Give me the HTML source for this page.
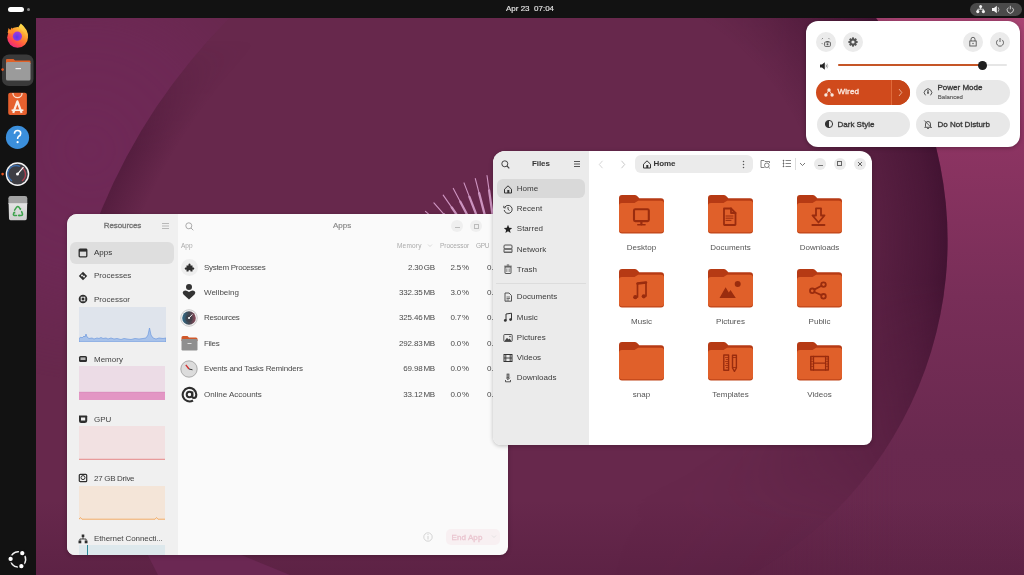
<!DOCTYPE html>
<html><head><meta charset="utf-8">
<style>
*{margin:0;padding:0;box-sizing:border-box}
html,body{width:1024px;height:575px;overflow:hidden;background:#6a2850;font-family:"Liberation Sans",sans-serif;-webkit-font-smoothing:antialiased}
#res,#files,#qs,#topbar{will-change:transform}
.abs{position:absolute}
#wall{position:absolute;left:0;top:0;width:1024px;height:575px}
#topbar{position:absolute;left:0;top:0;width:1024px;height:18px;background:#121212}
#dock{position:absolute;left:0;top:18px;width:36px;height:557px;background:#121212}
.t{position:absolute;white-space:nowrap;line-height:1}
/* resources window */
#res{position:absolute;left:67px;top:214px;width:441px;height:341px;border-radius:10px 10px 8px 8px;overflow:hidden;background:#fafafa;box-shadow:0 1px 4px rgba(0,0,0,.25)}
#res .side{position:absolute;left:0;top:0;width:111px;height:341px;background:#f0f0f0}
/* files window */
#files{position:absolute;left:493px;top:151px;width:379px;height:294px;border-radius:12px 12px 8px 8px;overflow:hidden;background:#fff;box-shadow:0 1px 4px rgba(0,0,0,.25)}
#files .side{position:absolute;left:0;top:0;width:96px;height:294px;background:#ebebeb}
/* quick settings */
#qs{position:absolute;left:806px;top:21px;width:214px;height:126px;border-radius:12px;background:#fff;box-shadow:0 1px 4px rgba(0,0,0,.3)}
</style></head><body>
<svg id="wall" width="1024" height="575" viewBox="0 0 1024 575">
  <defs>
    <linearGradient id="pinkG" gradientUnits="userSpaceOnUse" x1="0" y1="18" x2="0" y2="575">
      <stop offset="0" stop-color="#a84472"/><stop offset="0.23" stop-color="#8c3462"/><stop offset="0.5" stop-color="#782e58"/><stop offset="0.78" stop-color="#69294f"/><stop offset="1" stop-color="#67284c"/>
    </linearGradient>
    <linearGradient id="fadeX" gradientUnits="userSpaceOnUse" x1="700" y1="0" x2="900" y2="0">
      <stop offset="0" stop-color="#fff" stop-opacity="0"/><stop offset="1" stop-color="#fff" stop-opacity="1"/>
    </linearGradient>
    <mask id="mOutR" maskUnits="userSpaceOnUse" x="0" y="0" width="1024" height="575">
      <rect x="0" y="0" width="1024" height="575" fill="url(#fadeX)"/>
      <circle cx="565.6" cy="240.5" r="382" fill="#000"/>
    </mask>
    <radialGradient id="rimR" gradientUnits="userSpaceOnUse" cx="565.6" cy="240.5" r="382">
      <stop offset="0" stop-color="#3a0e2c" stop-opacity="0"/>
      <stop offset="0.68" stop-color="#3a0e2c" stop-opacity="0"/>
      <stop offset="0.84" stop-color="#3a0e2c" stop-opacity="0.36"/>
      <stop offset="0.95" stop-color="#3a0e2c" stop-opacity="0.62"/>
      <stop offset="1" stop-color="#3a0e2c" stop-opacity="0.8"/>
    </radialGradient>
    <linearGradient id="fadeR" gradientUnits="userSpaceOnUse" x1="600" y1="0" x2="790" y2="0">
      <stop offset="0" stop-color="#fff" stop-opacity="0"/><stop offset="1" stop-color="#fff" stop-opacity="1"/>
    </linearGradient>
    <linearGradient id="fadeRy" gradientUnits="userSpaceOnUse" x1="0" y1="280" x2="0" y2="520">
      <stop offset="0" stop-color="#fff" stop-opacity="1"/><stop offset="1" stop-color="#fff" stop-opacity="0.05"/>
    </linearGradient>
    <mask id="mRimR" maskUnits="userSpaceOnUse" x="0" y="0" width="1024" height="575">
      <rect x="0" y="0" width="1024" height="575" fill="url(#fadeR)"/>
    </mask>
    <mask id="mRimRy" maskUnits="userSpaceOnUse" x="0" y="0" width="1024" height="575">
      <rect x="0" y="0" width="1024" height="575" fill="url(#fadeRy)"/>
    </mask>
    <radialGradient id="rimL" gradientUnits="userSpaceOnUse" cx="646.5" cy="434.6" r="589.5">
      <stop offset="0" stop-color="#3a0e2c" stop-opacity="0"/>
      <stop offset="0.935" stop-color="#3a0e2c" stop-opacity="0"/>
      <stop offset="1" stop-color="#3a0e2c" stop-opacity="0.4"/>
    </radialGradient>
    <linearGradient id="leftG" gradientUnits="userSpaceOnUse" x1="0" y1="0" x2="400" y2="0">
      <stop offset="0" stop-color="#6f2957"/><stop offset="1" stop-color="#6f2957"/>
    </linearGradient>
    <radialGradient id="lightL" gradientUnits="userSpaceOnUse" cx="90" cy="150" r="230">
      <stop offset="0" stop-color="#fff" stop-opacity="1"/><stop offset="0.5" stop-color="#fff" stop-opacity="0.8"/><stop offset="1" stop-color="#fff" stop-opacity="0"/>
    </radialGradient>
    <linearGradient id="rimLfade" gradientUnits="userSpaceOnUse" x1="0" y1="40" x2="0" y2="280">
      <stop offset="0" stop-color="#fff" stop-opacity="0"/><stop offset="0.45" stop-color="#fff" stop-opacity="1"/><stop offset="0.72" stop-color="#fff" stop-opacity="1"/><stop offset="1" stop-color="#fff" stop-opacity="0"/>
    </linearGradient>
    <mask id="mRimL" maskUnits="userSpaceOnUse" x="0" y="0" width="1024" height="575">
      <rect x="0" y="0" width="1024" height="575" fill="url(#rimLfade)"/>
    </mask>
    <mask id="mOutL" maskUnits="userSpaceOnUse" x="0" y="0" width="1024" height="575">
      <rect x="0" y="0" width="1024" height="575" fill="url(#lightL)"/>
      <circle cx="646.5" cy="434.6" r="589.5" fill="#000"/>
    </mask>
  </defs>
  <rect width="1024" height="575" fill="#67284c"/>
  <rect x="0" y="0" width="400" height="575" fill="url(#leftG)" mask="url(#mOutL)"/>
  <circle cx="646.5" cy="434.6" r="589.5" fill="url(#rimL)" mask="url(#mRimL)"/>
  <rect x="560" y="0" width="464" height="575" fill="url(#pinkG)" mask="url(#mOutR)"/>
  <g mask="url(#mRimRy)"><circle cx="565.6" cy="240.5" r="382" fill="url(#rimR)" mask="url(#mRimR)"/></g>
  <linearGradient id="botDark" gradientUnits="userSpaceOnUse" x1="0" y1="500" x2="0" y2="575"><stop offset="0" stop-color="#3a0e2c" stop-opacity="0"/><stop offset="1" stop-color="#3a0e2c" stop-opacity="0.22"/></linearGradient>
  <rect x="36" y="500" width="988" height="75" fill="url(#botDark)"/>
  <path d="M140 540 L205 540 L290 575 L158 575 Z" fill="#6b2853"/>
  <g><path d="M425.5 211.4L436.6 221.5" stroke="#cf96c2" stroke-width="1.1" stroke-linecap="round"/><path d="M436.6 221.5L469.9 251.8" stroke="#cc94c0" stroke-width="2.3" stroke-linecap="round"/><path d="M433.9 202.8L443.8 214.1" stroke="#cf96c2" stroke-width="1.1" stroke-linecap="round"/><path d="M443.8 214.1L473.3 248.0" stroke="#cc94c0" stroke-width="2.3" stroke-linecap="round"/><path d="M443.2 195.1L451.7 207.4" stroke="#cf96c2" stroke-width="1.1" stroke-linecap="round"/><path d="M451.7 207.4L477.1 244.6" stroke="#cc94c0" stroke-width="2.3" stroke-linecap="round"/><path d="M453.3 188.4L460.3 201.7" stroke="#cf96c2" stroke-width="1.1" stroke-linecap="round"/><path d="M460.3 201.7L481.2 241.5" stroke="#cc94c0" stroke-width="2.3" stroke-linecap="round"/><path d="M464.0 182.9L469.4 196.9" stroke="#cf96c2" stroke-width="1.1" stroke-linecap="round"/><path d="M469.4 196.9L485.7 238.8" stroke="#cc94c0" stroke-width="2.3" stroke-linecap="round"/><path d="M475.3 178.6L479.1 193.1" stroke="#cf96c2" stroke-width="1.1" stroke-linecap="round"/><path d="M479.1 193.1L490.4 236.6" stroke="#cc94c0" stroke-width="2.3" stroke-linecap="round"/><path d="M487.0 175.5L489.1 190.4" stroke="#cf96c2" stroke-width="1.1" stroke-linecap="round"/><path d="M489.1 190.4L495.4 234.9" stroke="#cc94c0" stroke-width="2.3" stroke-linecap="round"/><path d="M498.9 173.7L499.3 188.7" stroke="#cf96c2" stroke-width="1.1" stroke-linecap="round"/><path d="M499.3 188.7L500.6 233.7" stroke="#cc94c0" stroke-width="2.3" stroke-linecap="round"/></g>
</svg>

<div id="topbar">
  <div class="abs" style="left:8px;top:7px;width:16px;height:5px;border-radius:3px;background:#fff"></div>
  <div class="abs" style="left:27px;top:8px;width:3px;height:3px;border-radius:50%;background:#888"></div>
  <div class="t" style="left:506px;top:5.3px;font-size:8px;color:#e4e4e4;-webkit-text-stroke:0.15px #e4e4e4">Apr 23&nbsp;&nbsp;07:04</div>
  <div class="abs" style="left:970px;top:2.5px;width:52px;height:13.8px;border-radius:7px;background:#4a4a4a"></div>
  <svg class="abs" style="left:975px;top:4px" width="45" height="11">
    <g fill="#f4f4f4"><circle cx="5.6" cy="2.4" r="1.5"/><circle cx="2.8" cy="7.6" r="1.6"/><circle cx="8.4" cy="7.6" r="1.6"/></g>
    <path d="M5.6 2.4V5.2M2.8 7.6V5.2H8.4V7.6" fill="none" stroke="#f4f4f4" stroke-width="0.8"/>
    <path d="M17 4H19L21.8 1.8V9.2L19 7H17Z" fill="#f4f4f4"/>
    <path d="M23.2 3.3Q24.6 5.5 23.2 7.7" fill="none" stroke="#ccc" stroke-width="0.9"/>
    <path d="M33.4 3.6A3.1 3.1 0 1 0 37.2 3.6" fill="none" stroke="#ddd" stroke-width="0.9"/>
    <path d="M35.3 1.8V5.3" stroke="#ddd" stroke-width="0.9"/>
  </svg>
</div>

<div id="dock">
  <svg class="abs" style="left:0;top:0" width="36" height="557" viewBox="0 18 36 557">
    <defs>
      <linearGradient id="ffg" x1="0.85" y1="0.1" x2="0.25" y2="0.95">
        <stop offset="0" stop-color="#ffd23c"/><stop offset="0.4" stop-color="#ff8a2e"/><stop offset="0.75" stop-color="#ff4a4a"/><stop offset="1" stop-color="#e82a80"/>
      </linearGradient>
      <linearGradient id="ffy" x1="0" y1="0" x2="0" y2="1">
        <stop offset="0" stop-color="#ffe04a"/><stop offset="1" stop-color="#ffa63a"/>
      </linearGradient>
      <radialGradient id="ffp" cx="0.45" cy="0.6" r="0.6">
        <stop offset="0" stop-color="#5a3ae8"/><stop offset="1" stop-color="#a83ad8"/>
      </radialGradient>
      <linearGradient id="trg" x1="0" y1="0" x2="0" y2="1">
        <stop offset="0" stop-color="#e4e4e4"/><stop offset="1" stop-color="#cfcfcf"/>
      </linearGradient>
    </defs>
    <!-- firefox -->
    <circle cx="17.6" cy="37.4" r="10.4" fill="url(#ffg)"/>
    <path d="M18.5 27 Q20 25 20.8 23.6 Q24 26 26.5 30 Q28.6 34 28 38.5 Q26 33 22 30.5 Z" fill="url(#ffy)"/>
    <path d="M7.6 33 L8.6 28 L10.3 30.2 L11.6 27.6 L13.2 30 L12 33.5 Z" fill="#ff8c2c"/>
    <circle cx="17.4" cy="36.2" r="4.6" fill="url(#ffp)"/>
  <!-- files (active) -->
    <rect x="2" y="54.5" width="31.5" height="31.5" rx="7" fill="#3a3a3a"/>
    <path d="M6 60 Q6 59 7 59 L13.5 59 L15 60.5 L29.5 60.5 Q30.5 60.5 30.5 61.5 L30.5 64 L6 64 Z" fill="#e0622a"/>
    <rect x="6" y="62" width="24.5" height="18.5" rx="1.5" fill="#9b9b9b"/>
    <rect x="15.5" y="68" width="5.5" height="1.2" fill="#eee"/>
    <circle cx="2.6" cy="69.6" r="1.3" fill="#e95420"/>
    <!-- app center -->
    <rect x="8.2" y="92.7" width="18.7" height="22.4" rx="2" fill="#e6602e"/>
    <path d="M12.9 93 A4.6 4.6 0 0 0 22.1 93" fill="none" stroke="#f8e0d0" stroke-width="1.3"/>
    <path d="M13.2 112.8 L17.4 101.3 L21.6 112.8" fill="none" stroke="#fbeee6" stroke-width="2.2" stroke-linejoin="round"/>
    <path d="M11.6 110.2 L23.4 110.2" stroke="#fbeee6" stroke-width="1.6"/>
    <!-- help -->
    <circle cx="17.5" cy="137.4" r="11.6" fill="#3b8fdc"/>
    <path d="M14.4 133.7 Q14.6 130.5 17.6 130.5 Q20.7 130.5 20.7 133.4 Q20.7 135.2 18.7 136.3 Q17.6 137 17.6 139" fill="none" stroke="#fff" stroke-width="1.6"/>
    <circle cx="17.6" cy="142.2" r="1.1" fill="#fff"/>
    <!-- resources -->
    <circle cx="17.5" cy="174.1" r="11.8" fill="#f4f4f4"/>
    <circle cx="17.5" cy="174.1" r="10.3" fill="#3e3e44"/>
    <path d="M12 181 A8 8 0 0 1 20 166.5" fill="none" stroke="#3a6fb0" stroke-width="1.4"/>
    <path d="M21.5 167.5 A8 8 0 0 1 22 181" fill="none" stroke="#b04050" stroke-width="1.4"/>
    <path d="M17.5 174.1 L23.5 167.2" stroke="#fff" stroke-width="1.2"/>
    <circle cx="17.5" cy="174.1" r="1.5" fill="#fff"/>
    <circle cx="2.6" cy="174.1" r="1.3" fill="#e95420"/>
    <!-- trash -->
    <path d="M8.6 203 L27.2 203 L26.8 218.6 Q26.8 220.2 25.2 220.2 L10.6 220.2 Q9 220.2 9 218.6 Z" fill="url(#trg)"/>
    <path d="M8.4 198.2 Q8.4 196 10.6 196 L25 196 Q27.3 196 27.3 198.2 L27.3 203.6 L8.4 203.6 Z" fill="#a3a3a3"/>
    <path d="M8.4 203.6 H27.3" stroke="#e6e6e6" stroke-width="0.6"/>
    <g fill="none" stroke="#3da24c" stroke-width="1.5" stroke-linecap="round">
      <path d="M14.6 210.2 L16.6 207.2 Q17.8 205.6 19 207.2 L20.2 209"/>
      <path d="M21.6 211.6 L22.4 213.6 Q23 215.4 21 215.4 L18.8 215.4"/>
      <path d="M16.4 215.4 L14.6 215.4 Q12.8 215.4 13.6 213.6 L14.2 212.4"/>
    </g>
    <g fill="#3da24c"><path d="M19.2 208 L21.4 208.4 L20.6 210.4Z"/><path d="M19.4 214 L19.4 216.8 L17.6 215.4Z"/><path d="M13.2 212.8 L15.2 211.4 L15.4 213.6Z"/></g>
  <!-- ubuntu logo -->
    <g transform="translate(18.1,559.4) rotate(4)">
      <circle r="7.6" fill="none" stroke="#f2f2f2" stroke-width="1.5"/>
      <circle cx="-7.5" cy="0" r="2.9" fill="#fff" stroke="#121212" stroke-width="1.5"/>
      <circle cx="3.75" cy="-6.5" r="2.9" fill="#fff" stroke="#121212" stroke-width="1.5"/>
      <circle cx="3.75" cy="6.5" r="2.9" fill="#fff" stroke="#121212" stroke-width="1.5"/>
    </g>
  </svg>
</div>

<div id="res">
  <div class="side">
    <div class="t" style="left:36.8px;top:8.2px;font-size:8px;font-weight:400;color:#777;-webkit-text-stroke:0.35px #777;letter-spacing:-0.1px">Resources</div>
    <svg class="abs" style="left:94px;top:8px" width="9" height="8"><g stroke="#aaa" stroke-width="0.8"><path d="M1 1.5H8M1 4H8M1 6.5H8"/></g></svg>
    <div class="abs" style="left:3px;top:28px;width:104px;height:22px;border-radius:6px;background:#dedede"></div>
    <svg class="abs" style="left:11px;top:34px" width="10" height="10"><rect x="1.2" y="1.2" width="7.6" height="7.6" rx="0.8" fill="none" stroke="#2e2e2e" stroke-width="1.3"/><rect x="1" y="1" width="8" height="2.6" fill="#2e2e2e"/></svg>
    <div class="t" style="left:27px;top:35px;font-size:8px;color:#333">Apps</div>
    <svg class="abs" style="left:11px;top:57px" width="10" height="10"><path d="M5 0.8L9.2 5L5 9.2L0.8 5Z" fill="#2e2e2e"/><circle cx="4" cy="4.5" r="1" fill="#f0f0f0"/><circle cx="6" cy="5.5" r="1" fill="#f0f0f0"/></svg>
    <div class="t" style="left:27px;top:58.3px;font-size:8px;color:#444">Processes</div>
    <svg class="abs" style="left:11px;top:80px" width="10" height="10"><circle cx="5" cy="5" r="4.3" fill="#2e2e2e"/><rect x="3.2" y="3.2" width="3.6" height="3.6" fill="none" stroke="#f0f0f0" stroke-width="0.9"/></svg>
    <div class="t" style="left:27px;top:81.7px;font-size:8px;color:#444">Processor</div>
    <svg class="abs" style="left:12px;top:93px" width="87" height="35">
      <rect width="87" height="35" fill="#dfe4ec"/>
      <path d="M0 31.5 L2 30 L3 31 L5 29 L6 30 L7 27 L8 30 L10 31.5 L13 31 L15 32 L18 31 L20 31.5 L22 30.5 L24 31.5 L27 31 L29 32 L32 31 L35 32 L38 31.5 L42 32.5 L45 31.5 L48 32 L52 32.5 L56 31.5 L60 32 L64 31.5 L67 31 L69 28 L70.5 21 L72 28 L74 31 L77 32 L80 31 L84 31.5 L87 31 L87 35 L0 35 Z" fill="#a8c2ea" stroke="#6f9ade" stroke-width="0.7"/>
    </svg>
    <svg class="abs" style="left:11px;top:140px" width="10" height="10"><rect x="1" y="2" width="8" height="6" rx="1.5" fill="#2e2e2e"/><rect x="2.5" y="3.5" width="5" height="2.5" fill="#f0f0f0"/><path d="M3 3.5V6M5 3.5V6M7 3.5V6" stroke="#2e2e2e" stroke-width="0.6"/></svg>
    <div class="t" style="left:27px;top:141.6px;font-size:8px;color:#444">Memory</div>
    <svg class="abs" style="left:12px;top:152px" width="86" height="34">
      <rect width="86" height="34" fill="#ecdce6"/>
      <rect y="26.3" width="86" height="7.7" fill="#e396c4"/>
      <path d="M0 26.3 H86" stroke="#d878b4" stroke-width="0.7"/>
    </svg>
    <svg class="abs" style="left:11px;top:200px" width="10" height="10"><path d="M1 1.5H8.5Q9.2 1.5 9.2 2.2V6.5Q9.2 9 6.5 9H3Q1 9 1 7Z" fill="#2e2e2e"/><rect x="3" y="3.5" width="4.2" height="3" fill="#f0f0f0"/></svg>
    <div class="t" style="left:27px;top:201.6px;font-size:8px;color:#444">GPU</div>
    <svg class="abs" style="left:12px;top:212px" width="86" height="34">
      <rect width="86" height="34" fill="#f2e1e2"/>
      <path d="M0 33.3 H86" stroke="#e27474" stroke-width="0.8"/>
    </svg>
    <svg class="abs" style="left:11px;top:259px" width="10" height="10"><rect x="1.3" y="1.3" width="7.4" height="7.4" rx="1" fill="none" stroke="#2e2e2e" stroke-width="1.2"/><circle cx="5" cy="4.6" r="2" fill="none" stroke="#2e2e2e" stroke-width="1"/></svg>
    <div class="t" style="left:27px;top:260.9px;font-size:8px;color:#444;letter-spacing:-0.3px">27 GB Drive</div>
    <svg class="abs" style="left:12px;top:272px" width="86" height="34">
      <rect width="86" height="34" fill="#f4e5d8"/>
      <path d="M0 33.2 L1.5 31.5 L3 33.2 L40 33.2 L76 33.2 L77.5 31.5 L79 33.2 L86 33.2" fill="none" stroke="#f0a860" stroke-width="0.9"/>
    </svg>
    <svg class="abs" style="left:11px;top:320px" width="10" height="10"><rect x="3.7" y="0.5" width="2.6" height="2.6" fill="#2e2e2e"/><rect x="0.5" y="6.5" width="2.8" height="2.8" fill="#2e2e2e"/><rect x="6.7" y="6.5" width="2.8" height="2.8" fill="#2e2e2e"/><path d="M5 3V5M1.9 6.5V5H8.1V6.5" fill="none" stroke="#2e2e2e" stroke-width="0.9"/></svg>
    <div class="t" style="left:27px;top:321px;font-size:8px;color:#444;letter-spacing:-0.1px">Ethernet Connecti...</div>
    <svg class="abs" style="left:12px;top:331px" width="86" height="12">
      <rect width="86" height="12" fill="#dde8ec"/>
      <path d="M8.5 0 V12" stroke="#2a8a9a" stroke-width="1"/>
    </svg>
  </div>
  <svg class="abs" style="left:118px;top:8px" width="9" height="9"><circle cx="3.8" cy="3.8" r="3" fill="none" stroke="#aaa" stroke-width="1"/><path d="M6 6L8.3 8.3" stroke="#aaa" stroke-width="1"/></svg>
  <div class="t" style="left:266px;top:8.4px;font-size:8px;color:#8a8a8a;-webkit-text-stroke:0.2px #8a8a8a">Apps</div>
  <div class="abs" style="left:384px;top:6px;width:12px;height:12px;border-radius:50%;background:#efefef"></div>
  <div class="abs" style="left:387.5px;top:12.5px;width:5px;height:1px;background:#bbb"></div>
  <div class="abs" style="left:403px;top:6px;width:12px;height:12px;border-radius:50%;background:#efefef"></div>
  <div class="abs" style="left:406.5px;top:9.5px;width:5px;height:5px;border:1px solid #bbb"></div>
  <div class="t" style="left:114px;top:28.7px;font-size:6.5px;color:#aaa">App</div>
  <div class="t" style="left:330px;top:28.7px;font-size:6.5px;color:#aaa;letter-spacing:0.2px">Memory</div>
  <svg class="abs" style="left:360px;top:29px" width="6" height="5"><path d="M1 1.5L3 3.5L5 1.5" fill="none" stroke="#ccc" stroke-width="0.7"/></svg>
  <div class="t" style="left:373px;top:28.7px;font-size:6.5px;color:#aaa">Processor</div>
  <div class="t" style="left:409px;top:28.7px;font-size:6.5px;color:#aaa;letter-spacing:-0.3px">GPU</div>

  <div class="abs" style="left:114px;top:45px;width:17px;height:17px;border-radius:50%;background:#eeeeee"></div>
  <svg class="abs" style="left:117px;top:48px" width="11" height="11"><path d="M2.5 3.5H4.5Q4 1.5 5.5 1.5Q7 1.5 6.5 3.5H8.5V5.5Q10.3 5 10.3 6.5Q10.3 8 8.5 7.5V9.5H6.5Q7 8 5.5 8Q4 8 4.5 9.5H2.5V7.5Q0.7 8 0.7 6.5Q0.7 5 2.5 5.5Z" fill="#2e2e2e"/></svg>
  <div class="t" style="left:137px;top:49.5px;font-size:8px;color:#4a4a4a;letter-spacing:-0.3px">System Processes</div>

  <svg class="abs" style="left:114px;top:69px" width="16" height="18"><circle cx="8" cy="4" r="3" fill="#333"/><path d="M8 16.5 L2.5 11.5 Q0.8 9.5 2.5 8 Q5 6.5 8 9 Q11 6.5 13.5 8 Q15.2 9.5 13.5 11.5Z" fill="#333"/></svg>
  <div class="t" style="left:137px;top:74.5px;font-size:8px;color:#4a4a4a;letter-spacing:0px">Wellbeing</div>

  <svg class="abs" style="left:113px;top:95px" width="18" height="18">
    <defs><linearGradient id="rsg" x1="0" y1="0" x2="1" y2="0"><stop offset="0" stop-color="#2f6a88"/><stop offset="0.5" stop-color="#404650"/><stop offset="1" stop-color="#8a4858"/></linearGradient></defs>
    <circle cx="9" cy="9" r="8.3" fill="#f2f2f2" stroke="#b8b8b8" stroke-width="0.7"/>
    <circle cx="9" cy="9" r="6.8" fill="url(#rsg)"/>
    <circle cx="9" cy="9.6" r="3.5" fill="#3c3c44" opacity="0.6"/>
    <path d="M9 9L12.4 5.4" stroke="#f4f4f4" stroke-width="1"/><circle cx="9" cy="9" r="1.1" fill="#f4f4f4"/>
  </svg>
  <div class="t" style="left:137px;top:100px;font-size:8px;color:#4a4a4a;letter-spacing:-0.3px">Resources</div>

  <svg class="abs" style="left:114px;top:121px" width="17" height="16">
    <path d="M0.5 2.5Q0.5 1 2 1H6.5L8 2.5H15Q16.5 2.5 16.5 4V6H0.5Z" fill="#d0582a"/>
    <rect x="0.5" y="4" width="16" height="11.5" rx="1.2" fill="#8f8f8f"/>
    <rect x="6.5" y="8" width="4" height="0.9" fill="#e8e8e8"/>
  </svg>
  <div class="t" style="left:137px;top:125.5px;font-size:8px;color:#4a4a4a;letter-spacing:-0.3px">Files</div>

  <svg class="abs" style="left:113px;top:146px" width="18" height="18">
    <circle cx="9" cy="9" r="8.2" fill="#dcdcdc" stroke="#9a9a9a" stroke-width="0.8"/>
    <path d="M9 9L5.8 4.8" stroke="#d03030" stroke-width="1.4"/>
    <path d="M9 9L12.5 9.8" stroke="#333" stroke-width="1"/>
  </svg>
  <div class="t" style="left:137px;top:151px;font-size:8px;color:#4a4a4a;letter-spacing:-0.18px">Events and Tasks Reminders</div>

  <svg class="abs" style="left:114px;top:172px" width="17" height="17">
    <circle cx="8.5" cy="8.5" r="2.8" fill="none" stroke="#2e2e2e" stroke-width="2"/>
    <path d="M11.3 5.5V10Q11.3 12 13 12Q15.3 12 15.3 8.5A6.8 6.8 0 1 0 12 14.5" fill="none" stroke="#2e2e2e" stroke-width="2.1"/>
  </svg>
  <div class="t" style="left:137px;top:176.5px;font-size:8px;color:#4a4a4a;letter-spacing:0px">Online Accounts</div>

  <div class="t" style="right:73px;top:49.5px;font-size:8px;color:#4a4a4a;letter-spacing:-0.2px">2.30<span style="margin-left:1px">GB</span></div>
  <div class="t" style="right:73px;top:74.5px;font-size:8px;color:#4a4a4a;letter-spacing:-0.2px">332.35<span style="margin-left:1px">MB</span></div>
  <div class="t" style="right:73px;top:100px;font-size:8px;color:#4a4a4a;letter-spacing:-0.2px">325.46<span style="margin-left:1px">MB</span></div>
  <div class="t" style="right:73px;top:125.5px;font-size:8px;color:#4a4a4a;letter-spacing:-0.2px">292.83<span style="margin-left:1px">MB</span></div>
  <div class="t" style="right:73px;top:151px;font-size:8px;color:#4a4a4a;letter-spacing:-0.2px">69.98<span style="margin-left:1px">MB</span></div>
  <div class="t" style="right:73px;top:176.5px;font-size:8px;color:#4a4a4a;letter-spacing:-0.2px">33.12<span style="margin-left:1px">MB</span></div>
  <div class="t" style="right:39px;top:49.5px;font-size:8px;color:#4a4a4a;letter-spacing:-0.2px">2.5<span style="margin-left:1px">%</span></div>
  <div class="t" style="right:39px;top:74.5px;font-size:8px;color:#4a4a4a;letter-spacing:-0.2px">3.0<span style="margin-left:1px">%</span></div>
  <div class="t" style="right:39px;top:100px;font-size:8px;color:#4a4a4a;letter-spacing:-0.2px">0.7<span style="margin-left:1px">%</span></div>
  <div class="t" style="right:39px;top:125.5px;font-size:8px;color:#4a4a4a;letter-spacing:-0.2px">0.0<span style="margin-left:1px">%</span></div>
  <div class="t" style="right:39px;top:151px;font-size:8px;color:#4a4a4a;letter-spacing:-0.2px">0.0<span style="margin-left:1px">%</span></div>
  <div class="t" style="right:39px;top:176.5px;font-size:8px;color:#4a4a4a;letter-spacing:-0.2px">0.0<span style="margin-left:1px">%</span></div>
  <div class="t" style="left:420px;top:49.5px;font-size:8px;color:#4a4a4a">0.</div>
  <div class="t" style="left:420px;top:74.5px;font-size:8px;color:#4a4a4a">0.</div>
  <div class="t" style="left:420px;top:100px;font-size:8px;color:#4a4a4a">0.</div>
  <div class="t" style="left:420px;top:125.5px;font-size:8px;color:#4a4a4a">0.</div>
  <div class="t" style="left:420px;top:151px;font-size:8px;color:#4a4a4a">0.</div>
  <div class="t" style="left:420px;top:176.5px;font-size:8px;color:#4a4a4a">0.</div>

  <svg class="abs" style="left:356px;top:318px" width="10" height="10"><circle cx="5" cy="5" r="4.2" fill="none" stroke="#d0d0d0" stroke-width="0.9"/><path d="M5 4V7.5" stroke="#d0d0d0" stroke-width="1"/><circle cx="5" cy="2.6" r="0.6" fill="#d0d0d0"/></svg>
  <div class="abs" style="left:379px;top:315px;width:54px;height:16px;border-radius:5px;background:#f8f0f2"></div>
  <div class="t" style="left:384.5px;top:319.8px;font-size:8px;font-weight:400;color:#eac6d0;-webkit-text-stroke:0.3px #eac6d0;letter-spacing:0.1px">End App</div>
  <svg class="abs" style="left:424px;top:320px" width="6" height="5"><path d="M1 1.5L3 3.5L5 1.5" fill="none" stroke="#ddd" stroke-width="0.7"/></svg>
</div>

<div id="files">
  <div class="side">
    <svg class="abs" style="left:8px;top:9px" width="9" height="9"><circle cx="3.8" cy="3.8" r="3" fill="none" stroke="#444" stroke-width="1"/><path d="M6 6L8.3 8.3" stroke="#444" stroke-width="1.1"/></svg>
    <div class="t" style="left:39px;top:8.5px;font-size:8px;font-weight:700;color:#333;letter-spacing:-0.1px">Files</div>
    <svg class="abs" style="left:80px;top:9px" width="8" height="8"><path d="M1 1.5H7M1 4H7M1 6.5H7" stroke="#444" stroke-width="0.9"/></svg>
    <div class="abs" style="left:4px;top:28px;width:88px;height:19px;border-radius:6px;background:#d9d9d9"></div>
    <div class="abs" style="left:3px;top:132px;width:89.5px;height:1px;background:#dcdcdc"></div>
    <svg class="abs" style="left:9.6px;top:32.7px" width="10" height="10"><path d="M1.5 5.2L5 1.8L8.5 5.2V9H1.5Z" fill="none" stroke="#333" stroke-width="1"/><rect x="4.3" y="6" width="2" height="3" fill="#333"/></svg>
    <div class="t" style="left:23.8px;top:34.1px;font-size:8px;color:#3a3a3a">Home</div>
    <svg class="abs" style="left:9.6px;top:52.9px" width="10" height="10"><path d="M1.8 3.2A4 4 0 1 1 1.2 6" fill="none" stroke="#333" stroke-width="0.9"/><path d="M0.8 1.8V3.8H2.8" fill="none" stroke="#333" stroke-width="0.9"/><path d="M5 3V5.3L6.5 6.5" fill="none" stroke="#333" stroke-width="0.9"/></svg>
    <div class="t" style="left:23.8px;top:54.3px;font-size:8px;color:#3a3a3a">Recent</div>
    <svg class="abs" style="left:9.6px;top:72.9px" width="10" height="10"><path d="M5 0.8L6.2 3.7L9.2 3.9L6.9 5.9L7.6 8.9L5 7.3L2.4 8.9L3.1 5.9L0.8 3.9L3.8 3.7Z" fill="#222"/></svg>
    <div class="t" style="left:23.8px;top:74.3px;font-size:8px;color:#3a3a3a">Starred</div>
    <svg class="abs" style="left:9.6px;top:93.1px" width="10" height="10"><rect x="1" y="1" width="8" height="4" rx="1" fill="none" stroke="#444" stroke-width="0.9"/><rect x="1" y="5" width="8" height="3.5" rx="0.5" fill="none" stroke="#444" stroke-width="0.9"/><rect x="1" y="7.5" width="8" height="1.5" fill="#666"/></svg>
    <div class="t" style="left:23.8px;top:94.5px;font-size:8px;color:#3a3a3a">Network</div>
    <svg class="abs" style="left:9.6px;top:113.2px" width="10" height="10"><path d="M2 3H8V9Q8 9.5 7.5 9.5H2.5Q2 9.5 2 9Z" fill="none" stroke="#444" stroke-width="0.9"/><path d="M1.2 2.2H8.8M3.8 1H6.2" stroke="#444" stroke-width="0.9"/><path d="M3.5 4.5V8M5 4.5V8M6.5 4.5V8" stroke="#777" stroke-width="0.6"/></svg>
    <div class="t" style="left:23.8px;top:114.6px;font-size:8px;color:#3a3a3a">Trash</div>
    <svg class="abs" style="left:9.6px;top:141px" width="10" height="10"><path d="M2 1H6L8.5 3.5V9.2H2Z" fill="none" stroke="#444" stroke-width="0.9"/><path d="M3.5 5H7M3.5 6.5H7M3.5 8H6" stroke="#444" stroke-width="0.7"/></svg>
    <div class="t" style="left:23.8px;top:142.4px;font-size:8px;color:#3a3a3a">Documents</div>
    <svg class="abs" style="left:9.6px;top:161.1px" width="10" height="10"><path d="M3 8.5V2L8.5 1.2V7.5" fill="none" stroke="#333" stroke-width="1"/><circle cx="2.3" cy="8.4" r="1.4" fill="#333"/><circle cx="7.6" cy="7.6" r="1.4" fill="#333"/></svg>
    <div class="t" style="left:23.8px;top:162.5px;font-size:8px;color:#3a3a3a">Music</div>
    <svg class="abs" style="left:9.6px;top:181.5px" width="10" height="10"><rect x="0.8" y="1.5" width="8.4" height="7" rx="0.8" fill="none" stroke="#444" stroke-width="0.9"/><path d="M1.5 8L4 4.8L5.5 6.5L6.5 5.5L8.5 8Z" fill="#444"/><circle cx="7" cy="3.5" r="0.8" fill="#444"/></svg>
    <div class="t" style="left:23.8px;top:182.9px;font-size:8px;color:#3a3a3a">Pictures</div>
    <svg class="abs" style="left:9.6px;top:201.6px" width="10" height="10"><rect x="1" y="1.5" width="8" height="7" fill="none" stroke="#333" stroke-width="1"/><path d="M1 5H9M2.8 1.5V8.5M7.2 1.5V8.5" stroke="#333" stroke-width="0.9"/></svg>
    <div class="t" style="left:23.8px;top:203.0px;font-size:8px;color:#3a3a3a">Videos</div>
    <svg class="abs" style="left:9.6px;top:221.7px" width="10" height="10"><path d="M5 1V6.5M3.2 4.8L5 6.6L6.8 4.8" fill="none" stroke="#444" stroke-width="0.9"/><path d="M2.5 7V8.8H7.5V7" fill="none" stroke="#444" stroke-width="0.9"/><rect x="4" y="1" width="2" height="3.5" fill="none" stroke="#444" stroke-width="0.7"/></svg>
    <div class="t" style="left:23.8px;top:223.1px;font-size:8px;color:#3a3a3a">Downloads</div>
  </div>
  <svg class="abs" style="left:105px;top:9px" width="6" height="9"><path d="M4.5 0.8L1.3 4.5L4.5 8.2" fill="none" stroke="#ccc" stroke-width="0.8"/></svg>
  <svg class="abs" style="left:126.5px;top:9px" width="6" height="9"><path d="M1.5 0.8L4.7 4.5L1.5 8.2" fill="none" stroke="#bbb" stroke-width="0.8"/></svg>
  <div class="abs" style="left:141.7px;top:3.7px;width:118px;height:18px;border-radius:6px;background:#ebebeb"></div>
  <svg class="abs" style="left:148.5px;top:8px" width="10" height="10"><path d="M1.5 5.2L5 1.8L8.5 5.2V9H1.5Z" fill="none" stroke="#333" stroke-width="1"/><rect x="4.3" y="6" width="2" height="3" fill="#333"/></svg>
  <div class="t" style="left:160.5px;top:9px;font-size:8px;font-weight:700;color:#333;letter-spacing:-0.1px">Home</div>
  <svg class="abs" style="left:249px;top:9px" width="3" height="9"><circle cx="1.5" cy="1.5" r="0.75" fill="#555"/><circle cx="1.5" cy="4.5" r="0.75" fill="#555"/><circle cx="1.5" cy="7.5" r="0.75" fill="#555"/></svg>
  <svg class="abs" style="left:267px;top:7.5px" width="11" height="10"><path d="M1 8.5V1.5H4L5 2.5H9.5V4" fill="none" stroke="#666" stroke-width="0.8"/><path d="M1 8.5H4.5" stroke="#666" stroke-width="0.8"/><circle cx="6.8" cy="6.3" r="2.3" fill="none" stroke="#666" stroke-width="0.8"/><path d="M8.4 8L9.8 9.4" stroke="#666" stroke-width="0.9"/></svg>
  <svg class="abs" style="left:289px;top:8px" width="10" height="9"><path d="M3.5 1.5H9M3.5 4.5H9M3.5 7.5H9" stroke="#666" stroke-width="0.8"/><circle cx="1.5" cy="1.5" r="0.8" fill="#666"/><circle cx="1.5" cy="4.5" r="0.8" fill="#666"/><circle cx="1.5" cy="7.5" r="0.8" fill="#666"/><path d="M1.5 1.5V7.5" stroke="#666" stroke-width="0.6"/></svg>
  <div class="abs" style="left:302px;top:6.5px;width:0.8px;height:12px;background:#ddd"></div>
  <svg class="abs" style="left:305.5px;top:10.5px" width="7" height="5"><path d="M1 1L3.5 3.5L6 1" fill="none" stroke="#555" stroke-width="0.8"/></svg>
  <div class="abs" style="left:321.2px;top:6.5px;width:12px;height:12px;border-radius:50%;background:#ebebeb"></div>
  <div class="abs" style="left:325px;top:13.8px;width:4.5px;height:0.9px;background:#777"></div>
  <div class="abs" style="left:340.7px;top:6.5px;width:12px;height:12px;border-radius:50%;background:#ebebeb"></div>
  <div class="abs" style="left:344.4px;top:10px;width:4.6px;height:4.8px;border:0.9px solid #666"></div>
  <div class="abs" style="left:360.9px;top:6.5px;width:12px;height:12px;border-radius:50%;background:#ebebeb"></div>
  <svg class="abs" style="left:363.9px;top:9.5px" width="6" height="6"><path d="M1 1L5 5M5 1L1 5" stroke="#555" stroke-width="0.9"/></svg>
<svg class="abs" style="left:126px;top:44.4px" width="45" height="39" viewBox="0 0 45 39">
    <path d="M0 3Q0 0 3 0H15.5Q17.2 0 18.4 1.3L20.3 3.3H42Q45 3.3 45 6.3V20H0Z" fill="#b63a14"/>
    <path d="M0 11Q0 8 3 8H15.5L19.2 5.8H42Q45 5.8 45 8.8V35.5Q45 38.5 42 38.5H3Q0 38.5 0 35.5Z" fill="#bf4518"/>
    <path d="M0 11Q0 8 3 8H15.5L19.2 5.8H42Q45 5.8 45 8.8V34.5Q45 37.3 42 37.3H3Q0 37.3 0 34.5Z" fill="#e0602a"/>
    <g fill="none" stroke="#9a2c0e" stroke-width="1.8" stroke-linejoin="round" stroke-linecap="round"><rect x="15" y="14.3" width="14.8" height="11.8" rx="1.3" stroke-width="2.1"/><path d="M22.4 26V29.3" stroke-width="2.2"/><path d="M18.8 29.8H26" stroke-width="1.6"/></g>
  </svg>
  <div class="t" style="left:106px;width:85px;text-align:center;top:92.9px;font-size:8px;color:#555">Desktop</div>
<svg class="abs" style="left:215px;top:44.4px" width="45" height="39" viewBox="0 0 45 39">
    <path d="M0 3Q0 0 3 0H15.5Q17.2 0 18.4 1.3L20.3 3.3H42Q45 3.3 45 6.3V20H0Z" fill="#b63a14"/>
    <path d="M0 11Q0 8 3 8H15.5L19.2 5.8H42Q45 5.8 45 8.8V35.5Q45 38.5 42 38.5H3Q0 38.5 0 35.5Z" fill="#bf4518"/>
    <path d="M0 11Q0 8 3 8H15.5L19.2 5.8H42Q45 5.8 45 8.8V34.5Q45 37.3 42 37.3H3Q0 37.3 0 34.5Z" fill="#e0602a"/>
    <g fill="none" stroke="#9a2c0e" stroke-width="1.8" stroke-linejoin="round" stroke-linecap="round"><path d="M16 13.5H23L27.5 18V29.5Q27.5 30 27 30H16.5Q16 30 16 29.5Z"/><path d="M23 13.5V18H27.5"/><path d="M18 21H25M18 23.2H25M18 25.4H23" stroke-width="1"/></g>
  </svg>
  <div class="t" style="left:195px;width:85px;text-align:center;top:92.9px;font-size:8px;color:#555">Documents</div>
<svg class="abs" style="left:304px;top:44.4px" width="45" height="39" viewBox="0 0 45 39">
    <path d="M0 3Q0 0 3 0H15.5Q17.2 0 18.4 1.3L20.3 3.3H42Q45 3.3 45 6.3V20H0Z" fill="#b63a14"/>
    <path d="M0 11Q0 8 3 8H15.5L19.2 5.8H42Q45 5.8 45 8.8V35.5Q45 38.5 42 38.5H3Q0 38.5 0 35.5Z" fill="#bf4518"/>
    <path d="M0 11Q0 8 3 8H15.5L19.2 5.8H42Q45 5.8 45 8.8V34.5Q45 37.3 42 37.3H3Q0 37.3 0 34.5Z" fill="#e0602a"/>
    <g fill="none" stroke="#9a2c0e" stroke-width="1.8" stroke-linejoin="round" stroke-linecap="round"><path d="M19 13.3H24V20.5H27.5L21.5 27.5L15.5 20.5H19Z"/><path d="M15.3 30H27.5"/></g>
  </svg>
  <div class="t" style="left:284px;width:85px;text-align:center;top:92.9px;font-size:8px;color:#555">Downloads</div>
<svg class="abs" style="left:126px;top:118.4px" width="45" height="39" viewBox="0 0 45 39">
    <path d="M0 3Q0 0 3 0H15.5Q17.2 0 18.4 1.3L20.3 3.3H42Q45 3.3 45 6.3V20H0Z" fill="#b63a14"/>
    <path d="M0 11Q0 8 3 8H15.5L19.2 5.8H42Q45 5.8 45 8.8V35.5Q45 38.5 42 38.5H3Q0 38.5 0 35.5Z" fill="#bf4518"/>
    <path d="M0 11Q0 8 3 8H15.5L19.2 5.8H42Q45 5.8 45 8.8V34.5Q45 37.3 42 37.3H3Q0 37.3 0 34.5Z" fill="#e0602a"/>
    <g fill="none" stroke="#9a2c0e" stroke-width="1.8" stroke-linejoin="round" stroke-linecap="round"><path d="M18.5 28V14.5L27 13.5V27" stroke-width="1.7"/><path d="M18.5 14.5L27 13.5" stroke-width="2.6"/><circle cx="16.3" cy="28.2" r="2.1" fill="#9a2c0e" stroke="none"/><circle cx="24.8" cy="27.3" r="2.1" fill="#9a2c0e" stroke="none"/></g>
  </svg>
  <div class="t" style="left:106px;width:85px;text-align:center;top:166.5px;font-size:8px;color:#555">Music</div>
<svg class="abs" style="left:215px;top:118.4px" width="45" height="39" viewBox="0 0 45 39">
    <path d="M0 3Q0 0 3 0H15.5Q17.2 0 18.4 1.3L20.3 3.3H42Q45 3.3 45 6.3V20H0Z" fill="#b63a14"/>
    <path d="M0 11Q0 8 3 8H15.5L19.2 5.8H42Q45 5.8 45 8.8V35.5Q45 38.5 42 38.5H3Q0 38.5 0 35.5Z" fill="#bf4518"/>
    <path d="M0 11Q0 8 3 8H15.5L19.2 5.8H42Q45 5.8 45 8.8V34.5Q45 37.3 42 37.3H3Q0 37.3 0 34.5Z" fill="#e0602a"/>
    <g fill="none" stroke="#9a2c0e" stroke-width="1.8" stroke-linejoin="round" stroke-linecap="round"><circle cx="29.7" cy="15" r="3" fill="#9a2c0e" stroke="none"/><path d="M11.5 29L17.6 18.2L20.8 23.5L22.5 21L27.8 29Z" fill="#9a2c0e" stroke="none"/></g>
  </svg>
  <div class="t" style="left:195px;width:85px;text-align:center;top:166.5px;font-size:8px;color:#555">Pictures</div>
<svg class="abs" style="left:304px;top:118.4px" width="45" height="39" viewBox="0 0 45 39">
    <path d="M0 3Q0 0 3 0H15.5Q17.2 0 18.4 1.3L20.3 3.3H42Q45 3.3 45 6.3V20H0Z" fill="#b63a14"/>
    <path d="M0 11Q0 8 3 8H15.5L19.2 5.8H42Q45 5.8 45 8.8V35.5Q45 38.5 42 38.5H3Q0 38.5 0 35.5Z" fill="#bf4518"/>
    <path d="M0 11Q0 8 3 8H15.5L19.2 5.8H42Q45 5.8 45 8.8V34.5Q45 37.3 42 37.3H3Q0 37.3 0 34.5Z" fill="#e0602a"/>
    <g fill="none" stroke="#9a2c0e" stroke-width="1.8" stroke-linejoin="round" stroke-linecap="round"><circle cx="15.3" cy="21.8" r="2.3"/><circle cx="26.5" cy="15.6" r="2.3"/><circle cx="26.5" cy="27.3" r="2.3"/><path d="M17.3 20.6L24.5 16.8M17.3 23L24.5 26.1"/></g>
  </svg>
  <div class="t" style="left:284px;width:85px;text-align:center;top:166.5px;font-size:8px;color:#555">Public</div>
<svg class="abs" style="left:126px;top:191.4px" width="45" height="39" viewBox="0 0 45 39">
    <path d="M0 3Q0 0 3 0H15.5Q17.2 0 18.4 1.3L20.3 3.3H42Q45 3.3 45 6.3V20H0Z" fill="#b63a14"/>
    <path d="M0 11Q0 8 3 8H15.5L19.2 5.8H42Q45 5.8 45 8.8V35.5Q45 38.5 42 38.5H3Q0 38.5 0 35.5Z" fill="#bf4518"/>
    <path d="M0 11Q0 8 3 8H15.5L19.2 5.8H42Q45 5.8 45 8.8V34.5Q45 37.3 42 37.3H3Q0 37.3 0 34.5Z" fill="#e0602a"/>
    <g fill="none" stroke="#9a2c0e" stroke-width="1.8" stroke-linejoin="round" stroke-linecap="round"></g>
  </svg>
  <div class="t" style="left:106px;width:85px;text-align:center;top:240.3px;font-size:8px;color:#555">snap</div>
<svg class="abs" style="left:215px;top:191.4px" width="45" height="39" viewBox="0 0 45 39">
    <path d="M0 3Q0 0 3 0H15.5Q17.2 0 18.4 1.3L20.3 3.3H42Q45 3.3 45 6.3V20H0Z" fill="#b63a14"/>
    <path d="M0 11Q0 8 3 8H15.5L19.2 5.8H42Q45 5.8 45 8.8V35.5Q45 38.5 42 38.5H3Q0 38.5 0 35.5Z" fill="#bf4518"/>
    <path d="M0 11Q0 8 3 8H15.5L19.2 5.8H42Q45 5.8 45 8.8V34.5Q45 37.3 42 37.3H3Q0 37.3 0 34.5Z" fill="#e0602a"/>
    <g fill="none" stroke="#9a2c0e" stroke-width="1.8" stroke-linejoin="round" stroke-linecap="round"><rect x="15.8" y="13" width="4.8" height="15.3" stroke-width="1.4"/><path d="M17.5 15.5H20.6M18.3 17.5H20.6M17.5 19.5H20.6M18.3 21.5H20.6M17.5 23.5H20.6M18.3 25.5H20.6" stroke-width="0.8"/><path d="M24.5 13.2H28.4V26L26.45 29.3L24.5 26Z" stroke-width="1.4"/><path d="M24.5 15.5H28.4M24.5 25.5H28.4" stroke-width="0.9"/></g>
  </svg>
  <div class="t" style="left:195px;width:85px;text-align:center;top:240.3px;font-size:8px;color:#555">Templates</div>
<svg class="abs" style="left:304px;top:191.4px" width="45" height="39" viewBox="0 0 45 39">
    <path d="M0 3Q0 0 3 0H15.5Q17.2 0 18.4 1.3L20.3 3.3H42Q45 3.3 45 6.3V20H0Z" fill="#b63a14"/>
    <path d="M0 11Q0 8 3 8H15.5L19.2 5.8H42Q45 5.8 45 8.8V35.5Q45 38.5 42 38.5H3Q0 38.5 0 35.5Z" fill="#bf4518"/>
    <path d="M0 11Q0 8 3 8H15.5L19.2 5.8H42Q45 5.8 45 8.8V34.5Q45 37.3 42 37.3H3Q0 37.3 0 34.5Z" fill="#e0602a"/>
    <g fill="none" stroke="#9a2c0e" stroke-width="1.8" stroke-linejoin="round" stroke-linecap="round"><rect x="13.8" y="14.5" width="17.5" height="13.5" stroke-width="1.5"/><path d="M16.5 14.5V28M28.6 14.5V28M16.5 21.2H28.6" stroke-width="1.3"/><path d="M13.8 17H16.5M13.8 19.5H16.5M13.8 22H16.5M13.8 24.5H16.5M28.6 17H31.3M28.6 19.5H31.3M28.6 22H31.3M28.6 24.5H31.3" stroke-width="0.7"/></g>
  </svg>
  <div class="t" style="left:284px;width:85px;text-align:center;top:240.3px;font-size:8px;color:#555">Videos</div>
</div>

<div id="qs">
  <div class="abs" style="left:10.2px;top:10.8px;width:20px;height:20px;border-radius:50%;background:#ebebeb"></div>
  <svg class="abs" style="left:14.2px;top:14.8px" width="12" height="12">
    <path d="M1.8 3.2L2.8 2.2M8.6 2.2L9.6 3.2M1.8 7.2L2.8 8.2" fill="none" stroke="#666" stroke-width="0.9"/>
    <rect x="4.6" y="6" width="5.8" height="4.4" rx="0.8" fill="none" stroke="#555" stroke-width="0.9"/><circle cx="7.5" cy="8.2" r="1" fill="#555"/><rect x="6.3" y="5" width="2.4" height="1.2" fill="#555"/>
  </svg>
  <div class="abs" style="left:36.9px;top:10.8px;width:20px;height:20px;border-radius:50%;background:#ebebeb"></div>
  <svg class="abs" style="left:41.9px;top:15.8px" width="10" height="10">
    <g transform="translate(5,5)" fill="#555">
      <circle r="3.5"/>
      <rect x="-1" y="-4.6" width="2" height="9.2"/>
      <rect x="-1" y="-4.6" width="2" height="9.2" transform="rotate(45)"/>
      <rect x="-1" y="-4.6" width="2" height="9.2" transform="rotate(90)"/>
      <rect x="-1" y="-4.6" width="2" height="9.2" transform="rotate(135)"/>
    </g>
    <circle cx="5" cy="5" r="1.6" fill="#ebebeb"/>
  </svg>
  <div class="abs" style="left:157.1px;top:10.6px;width:20px;height:20px;border-radius:50%;background:#ebebeb"></div>
  <svg class="abs" style="left:162.1px;top:15.1px" width="10" height="11">
    <path d="M3 5V3.3A2 2 0 0 1 7 3.3V5" fill="none" stroke="#555" stroke-width="0.9"/>
    <rect x="1.8" y="5" width="6.4" height="5" fill="none" stroke="#555" stroke-width="0.9"/>
    <circle cx="5" cy="7.5" r="0.7" fill="#555"/>
  </svg>
  <div class="abs" style="left:183.9px;top:10.6px;width:20px;height:20px;border-radius:50%;background:#ebebeb"></div>
  <svg class="abs" style="left:188.9px;top:15.6px" width="10" height="10">
    <path d="M3 2.8A3.5 3.5 0 1 0 7 2.8" fill="none" stroke="#555" stroke-width="0.9"/>
    <path d="M5 1V5" stroke="#555" stroke-width="0.9"/>
  </svg>
  <svg class="abs" style="left:12.5px;top:39.5px" width="10" height="10">
    <path d="M1 3.6H3L5.8 1.2V8.8L3 6.4H1Z" fill="#222"/>
    <path d="M7 3.6Q7.9 5 7 6.4" fill="none" stroke="#555" stroke-width="0.7"/><path d="M8.2 2.6Q9.6 5 8.2 7.4" fill="none" stroke="#999" stroke-width="0.6"/>
  </svg>
  <div class="abs" style="left:31.9px;top:43.3px;width:169px;height:2px;border-radius:1px;background:#e6e6e6"></div>
  <div class="abs" style="left:31.9px;top:43.3px;width:144.5px;height:2px;border-radius:1px;background:#c55526"></div>
  <div class="abs" style="left:172px;top:39.9px;width:8.8px;height:8.8px;border-radius:50%;background:#1e1e1e"></div>

  <div class="abs" style="left:10.2px;top:58.5px;width:93.7px;height:25.1px;border-radius:12.6px;background:#d04a1c;overflow:hidden">
    <div class="abs" style="left:74.5px;top:0;width:20px;height:26px;background:#c64518"></div>
    <div class="abs" style="left:74.5px;top:0;width:0.7px;height:26px;background:#e06a3a"></div>
  </div>
  <svg class="abs" style="left:17.6px;top:66.8px" width="10" height="9">
    <circle cx="5" cy="2" r="1.7" fill="#f8e6dc"/><circle cx="1.9" cy="7" r="1.7" fill="#f8e6dc"/><circle cx="8.1" cy="7" r="1.7" fill="#f8e6dc"/>
    <path d="M5 2L1.9 7M5 2L8.1 7" stroke="#f8e6dc" stroke-width="0.8"/>
  </svg>
  <div class="t" style="left:31.6px;top:67.4px;font-size:8px;font-weight:400;color:#fbe6dc;-webkit-text-stroke:0.35px #fbe6dc;letter-spacing:0.1px">Wired</div>
  <svg class="abs" style="left:92.3px;top:66.5px" width="5" height="9"><path d="M1 1L3.8 4.5L1 8" fill="none" stroke="#f0c0a8" stroke-width="0.8"/></svg>

  <div class="abs" style="left:110.2px;top:58.5px;width:93.8px;height:25.1px;border-radius:12.6px;background:#e8e8e8"></div>
  <svg class="abs" style="left:117.2px;top:65.8px" width="10" height="10">
    <path d="M2.5 8.3A3.7 3.7 0 1 1 7.5 8.3" fill="none" stroke="#444" stroke-width="0.9"/>
    <path d="M5 3V5.8" stroke="#444" stroke-width="1.1"/><circle cx="5" cy="5.9" r="0.9" fill="#444"/>
  </svg>
  <div class="t" style="left:131.5px;top:63.2px;font-size:8px;font-weight:400;color:#3a3a3a;-webkit-text-stroke:0.35px #3a3a3a;letter-spacing:0px">Power Mode</div>
  <div class="t" style="left:131.8px;top:72.6px;font-size:6px;color:#5a5a5a;-webkit-text-stroke:0.15px #5a5a5a">Balanced</div>

  <div class="abs" style="left:10.6px;top:90.5px;width:93.3px;height:25.4px;border-radius:12.7px;background:#e8e8e8"></div>
  <svg class="abs" style="left:17.8px;top:98.2px" width="10" height="10">
    <circle cx="5" cy="5" r="3.6" fill="none" stroke="#333" stroke-width="1"/>
    <path d="M5 1.4A3.6 3.6 0 0 0 5 8.6Z" fill="#333"/>
  </svg>
  <div class="t" style="left:31.5px;top:99.8px;font-size:8px;font-weight:400;color:#3a3a3a;-webkit-text-stroke:0.35px #3a3a3a;letter-spacing:0px">Dark Style</div>

  <div class="abs" style="left:110.2px;top:90.5px;width:93.8px;height:25.4px;border-radius:12.7px;background:#e8e8e8"></div>
  <svg class="abs" style="left:117.2px;top:98px" width="10" height="11">
    <path d="M2.5 7.5V5A2.5 2.5 0 0 1 7.5 5V7.5L8.3 8.3H1.7Z" fill="none" stroke="#444" stroke-width="0.9"/>
    <path d="M4 9.5H6M1.3 1.5L8.7 9" stroke="#444" stroke-width="0.8"/>
  </svg>
  <div class="t" style="left:131.5px;top:99.8px;font-size:8px;font-weight:400;color:#3a3a3a;-webkit-text-stroke:0.35px #3a3a3a;letter-spacing:0px">Do Not Disturb</div>
</div>

</body></html>
